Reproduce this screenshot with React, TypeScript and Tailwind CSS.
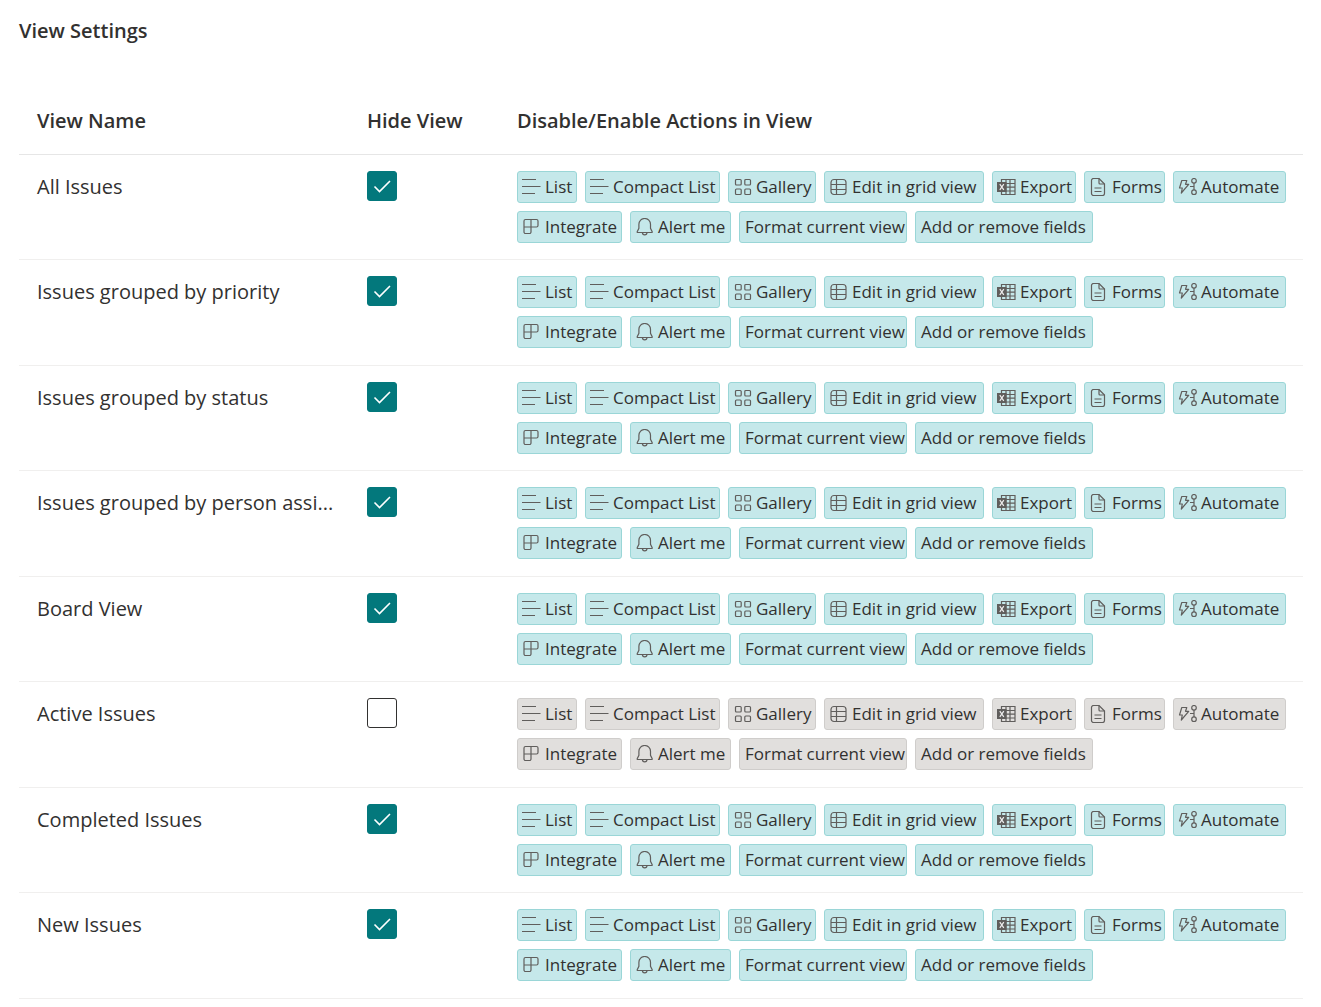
import React from "react";

type IconName = "list" | "gallery" | "grid" | "export" | "forms" | "automate" | "integrate" | "bell";

const icons: Record<IconName, React.ReactNode> = {
  list: <path d="M0 1.500h14M0 8.500h18.500M0 15.500h13" />,
  gallery: (
    <>
      <rect x="2.500" y="1.500" width="5.700" height="5.500" rx="1" />
      <rect x="11.800" y="1.500" width="5.700" height="5.500" rx="1" />
      <rect x="2.500" y="11" width="5.700" height="5.500" rx="1" />
      <rect x="11.800" y="11" width="5.700" height="5.500" rx="1" />
    </>
  ),
  grid: (
    <>
      <rect x="2" y="1.500" width="15" height="15" rx="3" />
      <path d="M7.500 1.500v15M2 6.500h15M2 11.500h15" />
    </>
  ),
  export: (
    <>
      <path d="M4.500 1.500H18v15H4.500zM13 1.500v15M9 1.500v15M4.500 5.500H18M8.500 9.200H18M4.500 13H18" />
      <path d="M0 4h9.500v10H0z" fill="currentColor" stroke="none" />
      <path d="M2.800 6.200l4 5.600M6.800 6.200l-4 5.600" className="stroke-white/90" />
    </>
  ),
  forms: (
    <>
      <path d="M4.500.500H10L15.500 6v9.500a2 2 0 0 1-2 2h-9a2 2 0 0 1-2-2v-13a2 2 0 0 1 2-2z" />
      <path d="M10 .500V5a1 1 0 0 0 1 1h4.500M5.500 10h7M5.500 13.500h7" />
    </>
  ),
  automate: (
    <>
      <path d="M3.800 2.500h5L7.500 6.300h3.200L3.300 15l1-5H1.500z" strokeLinejoin="round" />
      <circle cx="16" cy="2.800" r="2.300" />
      <circle cx="16" cy="14.200" r="2.300" />
      <path d="M16 5.100v6.800M16 8.500h-4" />
    </>
  ),
  integrate: (
    <path d="M3.500 1.500h11a1.500 1.500 0 0 1 1.500 1.500v4.500a1.500 1.500 0 0 1-1.500 1.500H2V3a1.500 1.500 0 0 1 1.500-1.500zM9 1.500V14a1.500 1.500 0 0 1-1.500 1.500h-4A1.500 1.500 0 0 1 2 14V9" />
  ),
  bell: (
    <path d="M9.700.500A5.800 5.800 0 0 0 3.900 6.300v4L2.200 13.800q-.200.700.500.700h14q.700 0 .500-.700L15.500 10.300v-4A5.800 5.800 0 0 0 9.700.500zM7.400 14.500a2.300 2.300 0 0 0 4.600 0" />
  ),
};

const actions: { label: string; icon?: IconName; width: string }[] = [
  { label: "List", icon: "list", width: "w-[60px]" },
  { label: "Compact List", icon: "list", width: "w-[135px]" },
  { label: "Gallery", icon: "gallery", width: "w-[88px]" },
  { label: "Edit in grid view", icon: "grid", width: "w-[160px]" },
  { label: "Export", icon: "export", width: "w-[84px]" },
  { label: "Forms", icon: "forms", width: "w-[81px]" },
  { label: "Automate", icon: "automate", width: "w-[113px]" },
  { label: "Integrate", icon: "integrate", width: "w-[105px]" },
  { label: "Alert me", icon: "bell", width: "w-[101px]" },
  { label: "Format current view", width: "w-[168px]" },
  { label: "Add or remove fields", width: "w-[178px]" },
];

const views = [
  { name: "All Issues", hidden: true },
  { name: "Issues grouped by priority", hidden: true },
  { name: "Issues grouped by status", hidden: true },
  { name: "Issues grouped by person assi...", hidden: true },
  { name: "Board View", hidden: true },
  { name: "Active Issues", hidden: false },
  { name: "Completed Issues", hidden: true },
  { name: "New Issues", hidden: true },
];

function ActionButton({ label, icon, width, enabled }: { label: string; icon?: IconName; width: string; enabled: boolean }) {
  const tone = enabled ? "border-[#9ad6d7] bg-[#c5e8ea]" : "border-[#cfcdcb] bg-[#e1dfdd]";
  return (
    <button
      type="button"
      className={`flex h-8 items-center gap-[3px] rounded-[3px] border text-[17px] leading-6 whitespace-nowrap text-[#323130] ${icon ? "pl-1" : "pl-[5px]"} ${width} ${tone}`}
    >
      {icon && (
        <svg viewBox="0 0 20 18" className="h-[18px] w-5 shrink-0 text-[#605e5c]" fill="none" stroke="currentColor" strokeWidth="1.2" aria-hidden="true">
          {icons[icon]}
        </svg>
      )}
      <span>{label}</span>
    </button>
  );
}

function HideCheckbox({ label, checked }: { label: string; checked: boolean }) {
  return (
    <span className="relative block size-[30px]">
      <input
        type="checkbox"
        defaultChecked={checked}
        aria-label={label}
        className="peer block size-[30px] appearance-none rounded-[3px] border border-[#323130] bg-white checked:border-[#03787c] checked:bg-[#03787c]"
      />
      <svg viewBox="0 0 30 30" className="pointer-events-none absolute inset-0 hidden size-[30px] peer-checked:block" fill="none" stroke="white" strokeWidth="1.6" aria-hidden="true">
        <path d="M7.500 15.500l5 5L23 10" />
      </svg>
    </span>
  );
}

export default function App() {
  return (
    <main className="min-h-screen bg-white px-[19px] pt-4 font-['Open_Sans','Segoe_UI',sans-serif] text-[#323130]">
      <h1 className="text-[20px] leading-[30px] font-semibold">View Settings</h1>
      <table className="mt-[42px] w-[calc(100%+1px)] table-fixed border-collapse text-left">
        <thead>
          <tr className="h-[66px] border-b border-[#e6e6e6] text-[20px] leading-7">
            <th scope="col" className="w-[330px] px-[18px] font-semibold">View Name</th>
            <th scope="col" className="w-[150px] pl-[18px] font-semibold">Hide View</th>
            <th scope="col" className="px-[18px] font-semibold">Disable/Enable Actions in View</th>
          </tr>
        </thead>
        <tbody>
          {views.map((view) => (
            <tr key={view.name} className="h-[105px] border-b border-[#f0efee] align-top even:h-[106px]">
              <td className="pt-[18px] pl-[18px] text-[20px] leading-7 whitespace-nowrap">{view.name}</td>
              <td className="pt-4 pl-[18px]">
                <HideCheckbox label={`Hide ${view.name}`} checked={view.hidden} />
              </td>
              <td className="pt-4 pl-[18px]">
                <div className="flex flex-wrap gap-2">
                  {actions.map((action) => (
                    <ActionButton key={action.label} {...action} enabled={view.hidden} />
                  ))}
                </div>
              </td>
            </tr>
          ))}
        </tbody>
      </table>
    </main>
  );
}
